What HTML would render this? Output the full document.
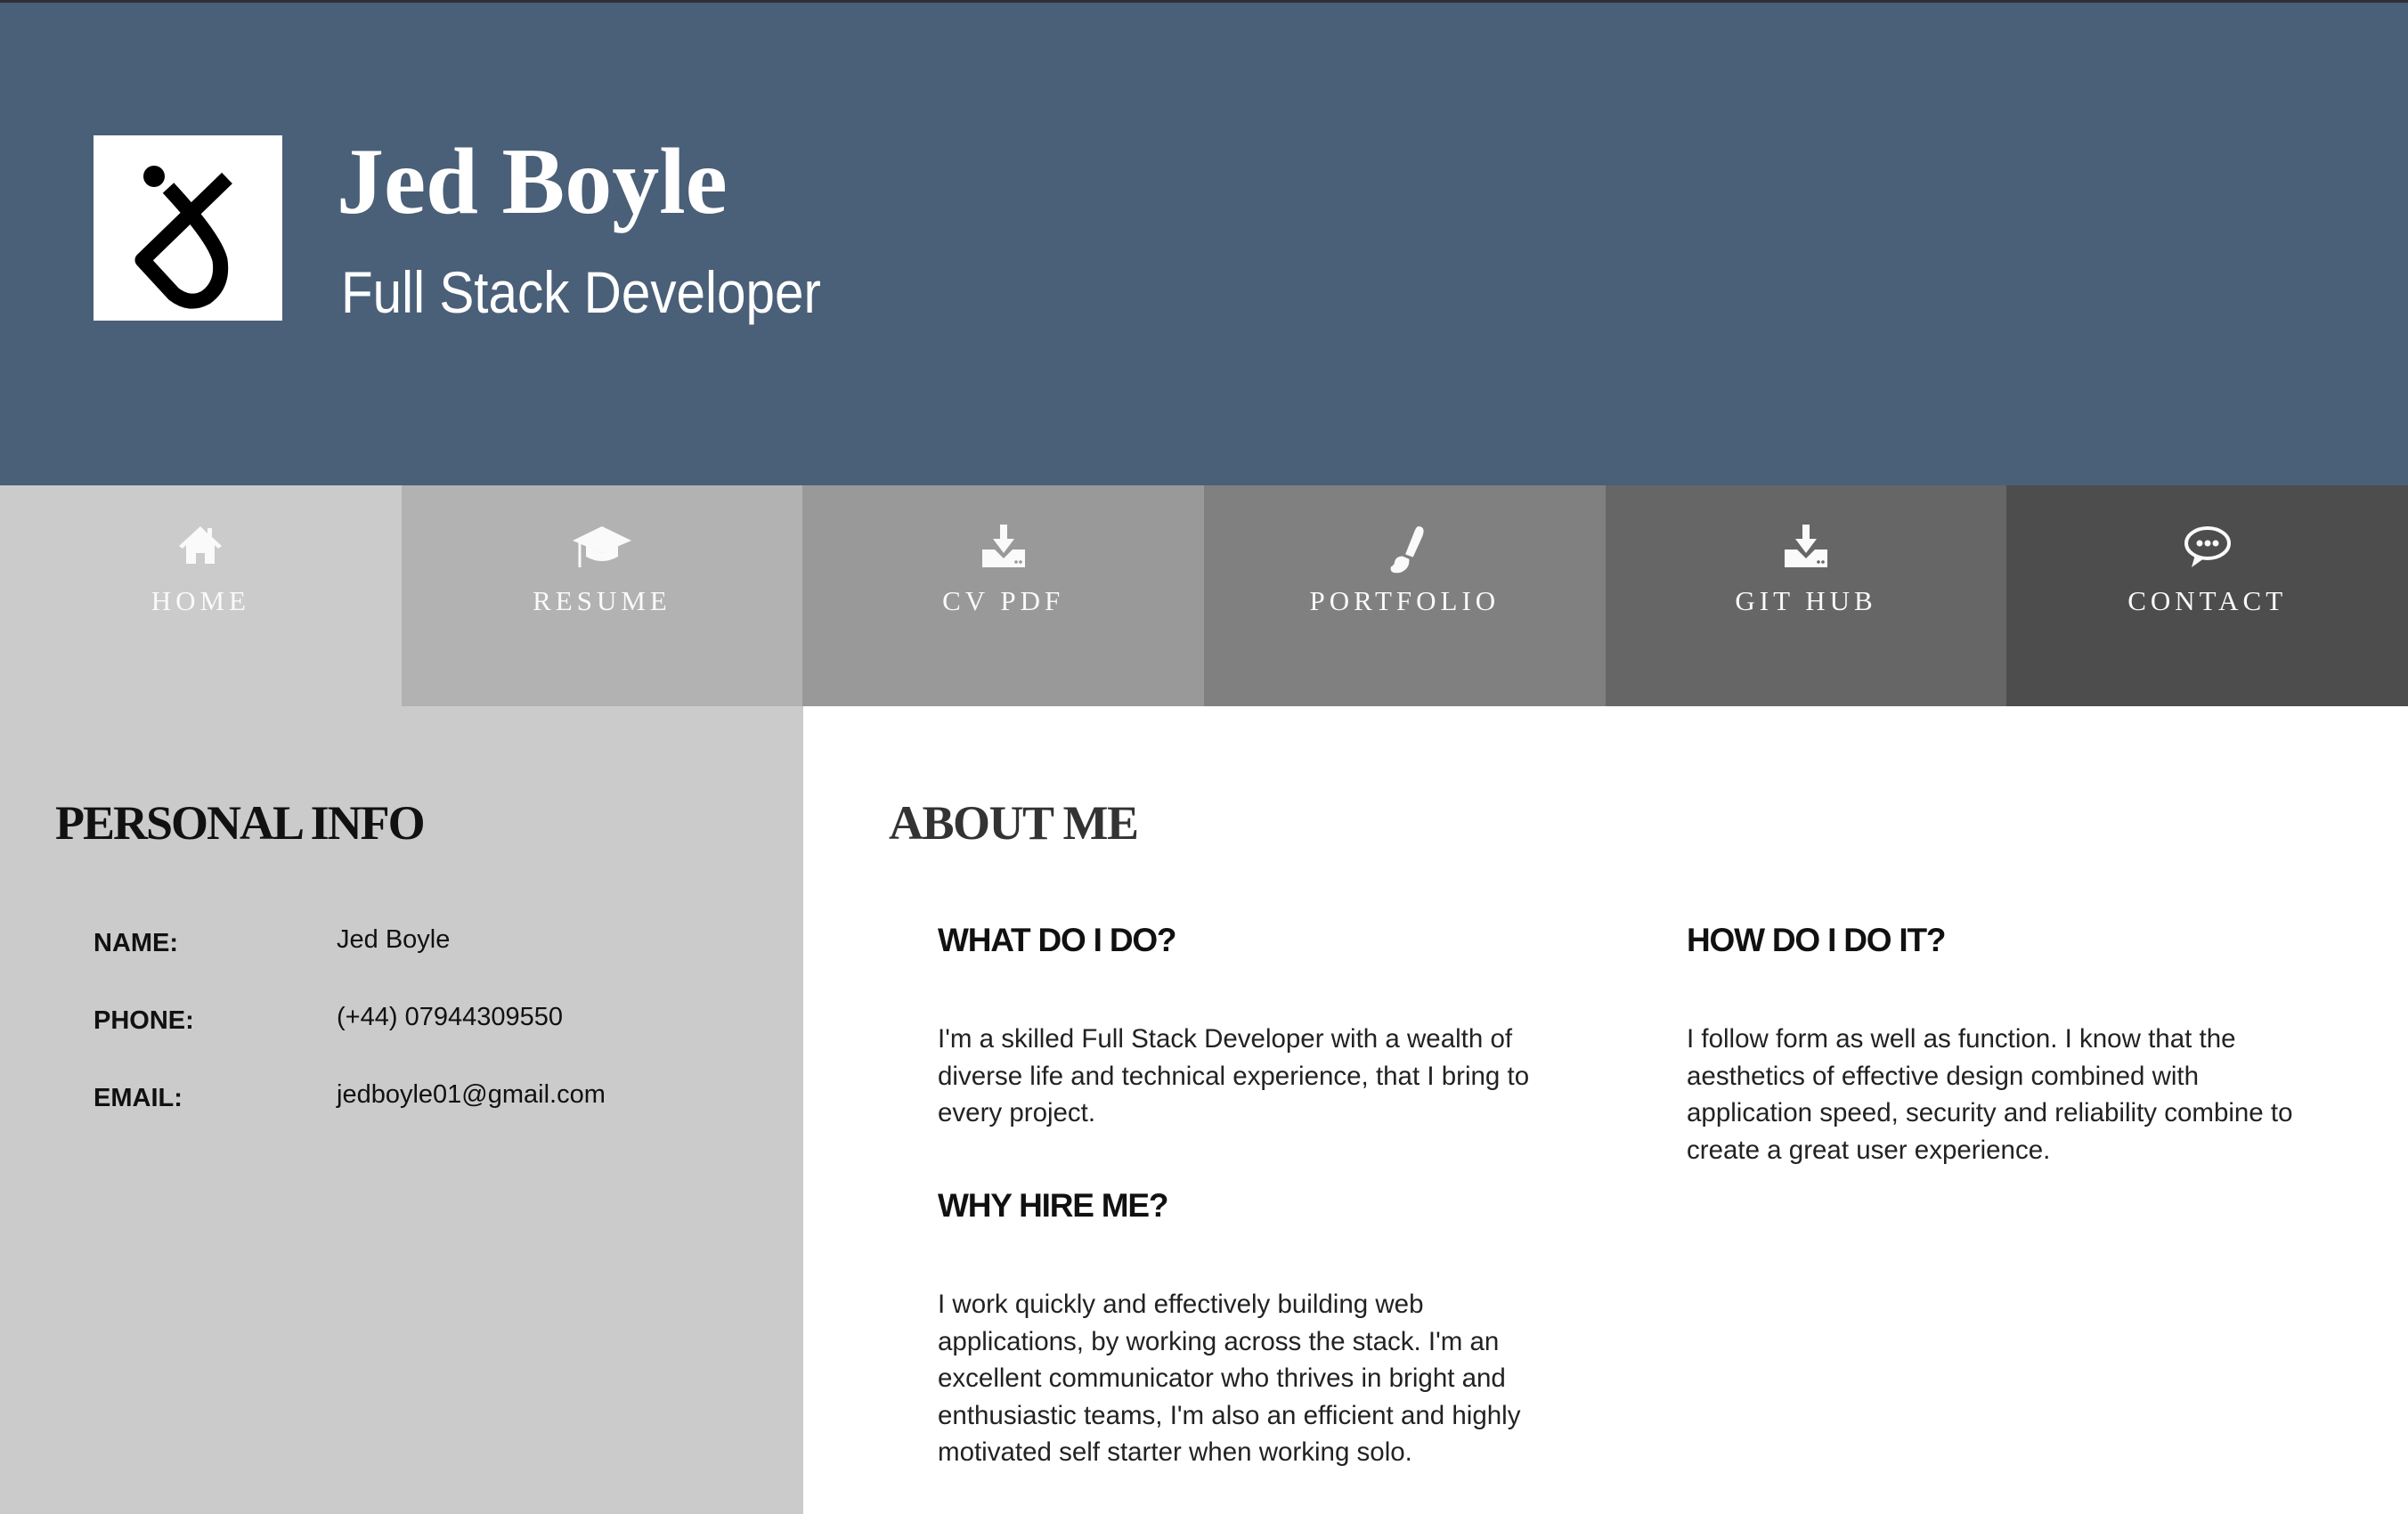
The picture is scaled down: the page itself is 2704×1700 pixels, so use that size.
<!DOCTYPE html>
<html><head><meta charset="utf-8"><style>
*{margin:0;padding:0;box-sizing:border-box}
body{width:2704px;height:1700px;overflow:hidden;background:#fff;font-family:"Liberation Sans",sans-serif;position:relative}
.top{position:absolute;left:0;top:0;width:2704px;height:3px;background:#2e3036}
header{position:absolute;left:0;top:3px;width:2704px;height:542px;background:#4a5f78}
.logo{position:absolute;left:105px;top:149px;width:212px;height:208px;background:#fff}
.name{position:absolute;left:378px;top:140px;font-family:"Liberation Serif",serif;font-weight:bold;font-size:106px;color:#fff;letter-spacing:0px;white-space:nowrap}
.sub{position:absolute;left:383px;top:287px;font-size:66px;color:#fff;white-space:nowrap;transform:scaleX(0.885);transform-origin:left top}
nav{position:absolute;left:0;top:545px;width:2704px;height:248px;display:flex}
nav div{flex:1;position:relative;color:#fafafa}
nav svg{position:absolute;left:50%;top:44px;transform:translateX(-50%)}
nav span{position:absolute;left:0;right:0;top:112px;text-align:center;font-family:"Liberation Serif",serif;font-size:31px;letter-spacing:5px}
.left{position:absolute;left:0;top:793px;width:902px;height:907px;background:#cbcbcb}
h2{position:absolute;font-family:"Liberation Serif",serif;font-weight:bold;font-size:54px;color:#111;white-space:nowrap;letter-spacing:-1px}
.lab{position:absolute;left:105px;font-weight:bold;font-size:29px;color:#111}
.val{position:absolute;left:378px;font-size:29px;color:#111}
h3{position:absolute;font-size:37px;font-weight:bold;color:#111;letter-spacing:-1.2px;white-space:nowrap}
p{position:absolute;font-size:29.5px;line-height:41.5px;color:#222;white-space:nowrap}
</style></head><body>
<div class="top"></div>
<header>
<div class="logo"><svg width="212" height="208" viewBox="0 0 212 208">
<circle cx="68" cy="46" r="12" fill="#000"/>
<path d="M150 48 L55 140 L90 178 Q108 192 126 182 Q146 168 142 140 Q136 115 84 59" fill="none" stroke="#000" stroke-width="17" stroke-linejoin="round"/>
</svg></div>
<div class="name">Jed Boyle</div>
<div class="sub">Full Stack Developer</div>
</header>
<nav>
<div style="background:#cbcbcb"><svg width="52" height="46" viewBox="0 0 52 46"><path d="M26 2 L2 24 L6 27 L10 23 V44 H21 V32 H31 V44 H42 V23 L46 27 L50 24 L39 14 V4 H34 V10 Z" fill="#fafafa"/></svg><span>HOME</span></div>
<div style="background:#b2b2b2"><svg width="70" height="50" viewBox="0 0 70 50"><path d="M35 2 L2 18 L35 32 L68 18 Z" fill="#fafafa"/><path d="M17 24 V36 Q35 46 53 36 V24 L35 32 Z" fill="#fafafa"/><path d="M10 21 V48" stroke="#fafafa" stroke-width="3"/></svg><span>RESUME</span></div>
<div style="background:#999"><svg width="52" height="50" viewBox="0 0 52 50"><path d="M22 0 H30 V16 H38 L26 32 L14 16 H22 Z" fill="#fafafa"/><path d="M2 28 H16 L26 38 L36 28 H50 V48 H2 Z" fill="#fafafa"/><circle cx="40" cy="42" r="1.8" fill="#999"/><circle cx="45" cy="42" r="1.8" fill="#999"/></svg><span>CV PDF</span></div>
<div style="background:#808080"><svg width="56" height="56" viewBox="0 0 52 52"><path d="M42 2 Q48 3 45 12 L35 34 L27 31 L37 6 Q39 1 42 2 Z" fill="#fafafa"/><path d="M24 33 L31 36 Q32 46 22 50 Q10 52 12 44 Q16 42 16 38 Q18 33 24 33 Z" fill="#fafafa"/></svg><span>PORTFOLIO</span></div>
<div style="background:#666"><svg width="52" height="50" viewBox="0 0 52 50"><path d="M22 0 H30 V16 H38 L26 32 L14 16 H22 Z" fill="#fafafa"/><path d="M2 28 H16 L26 38 L36 28 H50 V48 H2 Z" fill="#fafafa"/><circle cx="40" cy="42" r="1.8" fill="#666"/><circle cx="45" cy="42" r="1.8" fill="#666"/></svg><span>GIT HUB</span></div>
<div style="background:#4d4d4d"><svg width="56" height="52" viewBox="0 0 56 52"><ellipse cx="28" cy="21" rx="24" ry="17" fill="none" stroke="#fafafa" stroke-width="4"/><path d="M14 34 L10 48 L24 38" fill="#fafafa"/><circle cx="19" cy="21" r="3.5" fill="#fafafa"/><circle cx="28" cy="21" r="3.5" fill="#fafafa"/><circle cx="37" cy="21" r="3.5" fill="#fafafa"/></svg><span>CONTACT</span></div>
</nav>
<div class="left"></div>
<h2 style="left:62px;top:893px;letter-spacing:-2px">PERSONAL INFO</h2>
<h2 style="left:998px;top:893px;color:#333;letter-spacing:-1.5px">ABOUT ME</h2>
<div class="lab" style="top:1043px">NAME:</div>
<div class="lab" style="top:1130px">PHONE:</div>
<div class="lab" style="top:1217px">EMAIL:</div>
<div class="val" style="top:1039px">Jed Boyle</div>
<div class="val" style="top:1126px">(+44) 07944309550</div>
<div class="val" style="top:1213px">jedboyle01@gmail.com</div>
<h3 style="left:1053px;top:1035px">WHAT DO I DO?</h3>
<h3 style="left:1894px;top:1035px">HOW DO I DO IT?</h3>
<h3 style="left:1053px;top:1333px">WHY HIRE ME?</h3>
<p style="left:1053px;top:1146px">I'm a skilled Full Stack Developer with a wealth of<br>diverse life and technical experience, that I bring to<br>every project.</p>
<p style="left:1894px;top:1146px">I follow form as well as function. I know that the<br>aesthetics of effective design combined with<br>application speed, security and reliability combine to<br>create a great user experience.</p>
<p style="left:1053px;top:1444px">I work quickly and effectively building web<br>applications, by working across the stack. I'm an<br>excellent communicator who thrives in bright and<br>enthusiastic teams, I'm also an efficient and highly<br>motivated self starter when working solo.</p>
</body></html>
